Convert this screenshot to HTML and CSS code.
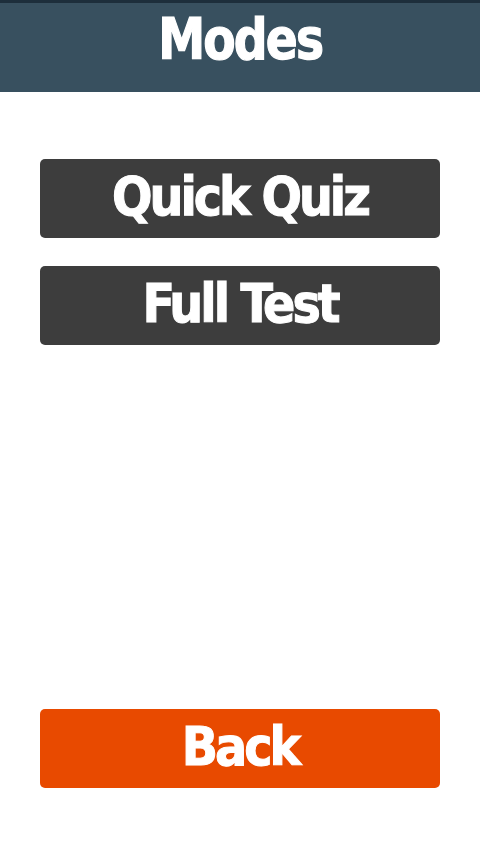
FILE: index.html
```html
<!DOCTYPE html>
<html>
<head>
<meta charset="utf-8">
<link rel="stylesheet" href="styles.css">
</head>
<body>
<div class="app">
  <header class="header"><h1 class="title">Modes</h1></header>
  <main class="content">
    <div class="modes">
      <button class="btn btn-dark">Quick Quiz</button>
      <button class="btn btn-dark">Full Test</button>
    </div>
    <button class="btn btn-orange">Back</button>
  </main>
</div>
</body>
</html>
```
FILE: styles.css
```css
html, body {
  margin: 0;
  padding: 0;
  background: #ffffff;
}
.app {
  width: 480px;
  height: 855px;
  display: flex;
  flex-direction: column;
  font-family: "DejaVu Sans Condensed", "DejaVu Sans", sans-serif;
  font-weight: bold;
}
.header {
  height: 89px;
  border-top: 3px solid #1d2e3b;
  background: #38505f;
  display: flex;
  align-items: center;
  justify-content: center;
}
.title {
  margin: 0;
  color: #ffffff;
  font-size: 57px;
  letter-spacing: -2px;
  line-height: 1;
  font-weight: bold;
  -webkit-text-stroke: 1.2px #ffffff;
  transform: scaleX(0.92);
  padding-bottom: 16px;
}
.content {
  flex: 1;
  display: flex;
  flex-direction: column;
  justify-content: space-between;
  padding: 67px 40px 67px 40px;
}
.modes {
  display: flex;
  flex-direction: column;
  gap: 28px;
}
.btn {
  height: 79px;
  width: 400px;
  border: none;
  border-radius: 5px;
  color: #ffffff;
  font-family: inherit;
  font-weight: bold;
  font-size: 53px;
  letter-spacing: -3px;
  -webkit-text-stroke: 1px #ffffff;
  line-height: 1;
  padding: 0 0 4px 0;
  cursor: pointer;
}
.btn-dark {
  background: #3d3d3d;
}
.btn-orange {
  background: #e84a00;
}
```
